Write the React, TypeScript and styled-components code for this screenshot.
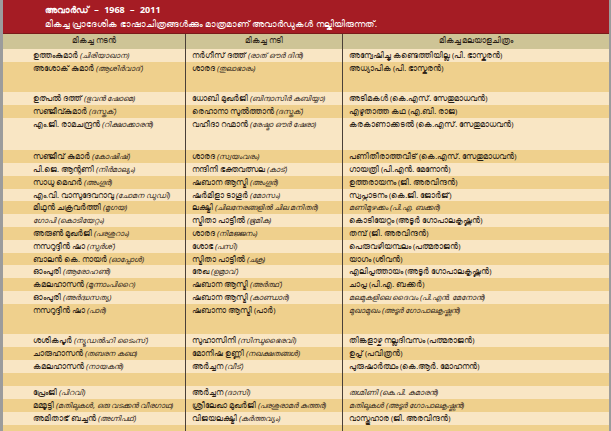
import React from "react";
import styled, { createGlobalStyle } from "styled-components";

const Global = createGlobalStyle`
  html, body { margin: 0; padding: 0; background: #ffffff; }
  body { font-family: "Noto Sans", "DejaVu Sans", sans-serif; }
`;

const Page = styled.div`
  width: 611px;
  height: 431px;
  overflow: hidden;
  box-sizing: border-box;
  border-left: 3px solid #9c9c9c;
  border-right: 2px solid #9c9c9c;
  background: #f9e6c4;
`;

const Banner = styled.div`
  background: #a51c24;
  color: #fff;
  height: 34px;
  box-sizing: border-box;
  padding: 3px 0 0 42px;
  display: flex;
  flex-direction: column;
  gap: 1px;
  font-size: 9px;
  line-height: 13px;
  border-bottom: 1px solid #7a1a1a;
`;

const Title = styled.div`
  font-weight: 700;
  word-spacing: 3px;
`;

const Row = styled.div<{ $bg: string; $h: number }>`
  display: flex;
  height: ${(p) => p.$h}px;
  background: ${(p) => p.$bg};
  font-size: 7.5px;
  color: #2b2115;
  line-height: 12px;
`;

const Cell = styled.div<{ $center?: boolean; $pad: number; $w: number }>`
  box-sizing: border-box;
  flex: 0 0 ${(p) => p.$w}px;
  width: ${(p) => p.$w}px;
  min-width: 0;
  border-left: 1px solid #4a4038;
  padding-left: ${(p) => p.$pad}px;
  text-align: ${(p) => (p.$center ? "center" : "left")};
  white-space: nowrap;
  overflow: hidden;
  &:first-child { border-left: none; }
`;

const Film = styled.i`
  font-style: italic;
`;

const LIGHT = "#f9e6c4";
const DARK = "#efd08d";
const HEAD = "#cec496";

type Entry = [string, string];
const rows: { h: number; c: Entry[] }[] = [
  { h: 13, c: [["ഉത്തംകുമാർ", "(ചിരിയാഖാന)"], ["നർഗീസ് ദത്ത്", "(രാത് ഔർ ദിൻ)"], ["അന്വേഷിച്ചു കണ്ടെത്തിയില്ല (പി. ഭാസ്കരൻ)", ""]] },
  { h: 30, c: [["അശോക് കുമാർ", "(ആശിർവാദ്)"], ["ശാരദ", "(തുലാഭാരം)"], ["അധ്യാപിക (പി. ഭാസ്കരൻ)", ""]] },
  { h: 13, c: [["ഉത്പൽ ദത്ത്", "(ഭുവൻ ഷോമെ)"], ["ധോബി മുഖർജി", "(ബിന്ദാസിർ കബിയ്യാ)"], ["അടിമകൾ (കെ.എസ്. സേതുമാധവൻ)", ""]] },
  { h: 13, c: [["സഞ്ജീവ്കുമാർ", "(ദസ്തക്)"], ["രെഹാനാ സുൽത്താൻ", "(ദസ്തക്)"], ["എഴുതാത്ത കഥ (എ.ബി. രാജ)", ""]] },
  { h: 32, c: [["എം.ജി. രാമചന്ദ്രൻ", "(റിക്ഷാക്കാരൻ)"], ["വഹീദാ റഹ്മാൻ", "(രേഷ്മാ ഔർ ഷേരാ)"], ["കരകാണാക്കടൽ (കെ.എസ്. സേതുമാധവൻ)", ""]] },
  { h: 13, c: [["സഞ്ജീവ് കുമാർ", "(കോഷിഷ്)"], ["ശാരദ", "(സ്വയംവരം)"], ["പണിതീരാത്തവീട് (കെ.എസ്. സേതുമാധവൻ)", ""]] },
  { h: 13, c: [["പി.ജെ. ആന്റണി", "(നിർമാല്യം)"], ["നന്ദിനി ഭക്തവത്സല", "(കാട്)"], ["ഗായത്രി (പി.എൻ. മേനോൻ)", ""]] },
  { h: 13, c: [["സാധു മെഹർ", "(അംഗൂർ)"], ["ഷബാന ആസ്മി", "(അംഗൂർ)"], ["ഉത്തരായനം (ജി. അരവിന്ദൻ)", ""]] },
  { h: 12, c: [["എം.വി. വാസുദേവറാവു", "(ചോമന ഡുഡി)"], ["ഷർമിളാ ടാഗൂർ", "(മോസം)"], ["സ്വപ്നാടനം (കെ.ജി. ജോർജ്)", ""]] },
  { h: 13, c: [["മിഥുൻ ചക്രവർത്തി", "(മൃഗയ)"], ["ലക്ഷ്മി", " (ചിലനേരങ്ങളിൽ ചില മനിതർ)"], ["", "മണിമുഴക്കം (പി.എ. ബക്കർ)"]] },
  { h: 13, c: [["", "ഗോപി (കൊടിയേറ്റം)"], ["സ്മിതാ പാട്ടീൽ", "(ഭൂമിക)"], ["കൊടിയേറ്റം (അടൂർ ഗോപാലകൃഷ്ണൻ)", ""]] },
  { h: 13, c: [["അരുൺ മുഖർജി", "(പരശുറാം)"], ["ശാരദ", "(നിമജ്ജനം)"], ["തമ്പ് (ജി. അരവിന്ദൻ)", ""]] },
  { h: 13, c: [["നസറുദ്ദീൻ ഷാ", "(സ്പർശ്)"], ["ശോഭ", "(പസി)"], ["പെരുവഴിയമ്പലം (പത്മരാജൻ)", ""]] },
  { h: 12, c: [["ബാലൻ കെ. നായർ", "(ഓപ്പോൾ)"], ["സ്മിതാ പാട്ടീൽ", "(ചക്ര)"], ["യാഗം (ശിവൻ)", ""]] },
  { h: 13, c: [["ഓംപുരി", "(ആരോഹൺ)"], ["രേഖ", "(ഉമ്രാവ്)"], ["എലിപ്പത്തായം (അടൂർ ഗോപാലകൃഷ്ണൻ)", ""]] },
  { h: 13, c: [["കമലഹാസൻ", "(മൂന്നാംപിറൈ)"], ["ഷബാന ആസ്മി", "(അർത്ഥ്)"], ["ചാപ്പ (പി.എ. ബക്കർ)", ""]] },
  { h: 13, c: [["ഓംപുരി", "(അർദ്ധസത്യ)"], ["ഷബാന ആസ്മി", "(കാണ്ഡാർ)"], ["", "മലമുകളിലെ ദൈവം (പി.എൻ. മേനോൻ)"]] },
  { h: 30, c: [["നസറുദ്ദീൻ ഷാ", "(പാർ)"], ["ഷബാനാ ആസ്മി (പാർ)", ""], ["", "മുഖാമുഖം (അടൂർ ഗോപാലകൃഷ്ണൻ)"]] },
  { h: 13, c: [["ശശികപൂർ", "(ന്യൂഡൽഹി ടൈംസ്)"], ["സുഹാസിനി", "(സിന്ധുഭൈരവി)"], ["തിങ്കളാഴ്ച നല്ലദിവസം (പത്മരാജൻ)", ""]] },
  { h: 13, c: [["ചാരുഹാസൻ", "(തബരന കഥെ)"], ["മോനിഷ ഉണ്ണി", "(നഖക്ഷതങ്ങൾ)"], ["ഉപ്പ് (പവിത്രൻ)", ""]] },
  { h: 13, c: [["കമലഹാസൻ", "(നായകൻ)"], ["അർച്ചന", "(വീട്)"], ["പുരുഷാർത്ഥം (കെ.ആർ. മോഹനൻ)", ""]] },
  { h: 13, c: [["", ""], ["", ""], ["", ""]] },
  { h: 13, c: [["പ്രേംജി", "(പിറവി)"], ["അർച്ചന", "(ദാസി)"], ["", "രുഗ്മിണി (കെ.പി. കുമാരൻ)"]] },
  { h: 13, c: [["മമ്മൂട്ടി", "(മതിലുകൾ, ഒരു വടക്കൻ വീരഗാഥ)"], ["ശ്രീലേഖാ മുഖർജി", "(പരശുരാമർ കുത്തർ)"], ["", "മതിലുകൾ (അടൂർ ഗോപാലകൃഷ്ണൻ)"]] },
  { h: 13, c: [["അമിതാഭ് ബച്ചൻ", "(അഗ്നിപഥ്)"], ["വിജയലക്ഷ്മി", "(കർത്തവ്യം)"], ["വാസ്തുഹാര (ജി. അരവിന്ദൻ)", ""]] },
  { h: 8, c: [["", ""], ["", ""], ["", ""]] },
];

const pads = [42, 6, 6];
const widths = [182, 157, 267];

export default function App() {
  return (
    <>
      <Global />
      <Page>
        <Banner>
          <Title>അവാർഡ്  –  1968  –  2011</Title>
          <div>മികച്ച പ്രാദേശിക ഭാഷാചിത്രങ്ങൾക്കും മാത്രമാണ് അവാർഡുകൾ നല്കിയിരുന്നത്.</div>
        </Banner>
        <Row $bg={HEAD} $h={15}>
          <Cell $center $pad={0} $w={widths[0]}>മികച്ച നടൻ</Cell>
          <Cell $center $pad={0} $w={widths[1]}>മികച്ച നടി</Cell>
          <Cell $center $pad={0} $w={widths[2]}>മികച്ച മലയാളചിത്രം</Cell>
        </Row>
        {rows.map((r, i) => (
          <Row key={i} $bg={i % 2 === 0 ? LIGHT : DARK} $h={r.h}>
            {r.c.map(([name, film], j) => (
              <Cell key={j} $pad={j === 0 ? 30 : pads[j]} $w={widths[j]}>
                {name}
                {name && film ? " " : ""}
                {film && <Film>{film}</Film>}
              </Cell>
            ))}
          </Row>
        ))}
      </Page>
    </>
  );
}
